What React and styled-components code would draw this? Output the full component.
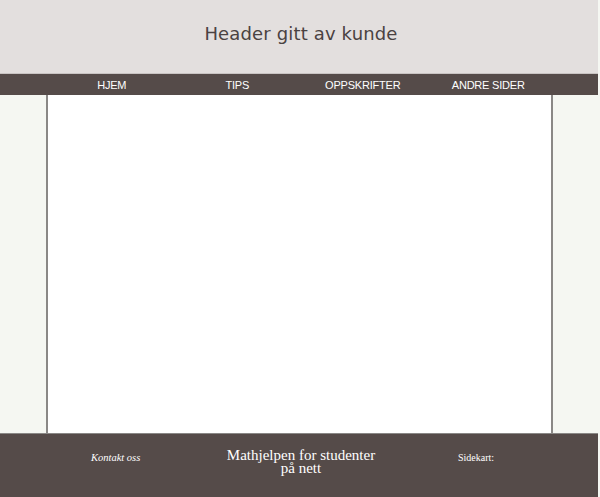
import styled, { createGlobalStyle } from "styled-components";

const GlobalStyle = createGlobalStyle`
  html, body {
    margin: 0;
    padding: 0;
    background: #f5f7f2;
  }
`;

const Page = styled.div`
  width: 598px;
  height: 497px;
  display: flex;
  flex-direction: column;
  background-color: #f5f7f2;
`;

const Header = styled.header`
  height: 73px;
  flex-shrink: 0;
  background-color: #e3dfde;
  border-bottom: 1px solid #c9c4c3;
  display: flex;
  justify-content: center;
  align-items: center;
`;

const Title = styled.h1`
  margin: 0 0 6px 4px;
  font-family: "DejaVu Sans", Verdana, sans-serif;
  font-weight: normal;
  font-size: 18px;
  color: #4a4242;
  letter-spacing: 0.15px;
`;

const Nav = styled.nav`
  height: 21px;
  flex-shrink: 0;
  background-color: #554b49;
  display: flex;
  justify-content: center;
`;

const NavList = styled.ul`
  margin: 0;
  padding: 0;
  list-style: none;
  width: 502px;
  display: grid;
  grid-template-columns: repeat(4, 1fr);
  margin-left: 2px;
`;

const NavItem = styled.li`
  display: flex;
  justify-content: center;
  align-items: center;
  font-family: "Liberation Sans", Arial, sans-serif;
  font-size: 11px;
  letter-spacing: -0.2px;
  color: #ffffff;
  text-transform: uppercase;
`;

const Middle = styled.div`
  flex: 1;
  display: flex;
  justify-content: center;
`;

const Main = styled.main`
  width: 503px;
  margin-left: 1px;
  background-color: #ffffff;
  border-left: 2px solid #8a8886;
  border-right: 2px solid #8a8886;
`;

const Footer = styled.footer`
  height: 64px;
  flex-shrink: 0;
  background-color: #554b49;
  border-top: 1px solid #8a8886;
  display: grid;
  grid-template-columns: 152px 298px 148px;
  padding-top: 15px;
  box-sizing: border-box;
  font-family: "Liberation Serif", "Times New Roman", serif;
  color: #ffffff;
`;

const FooterCell = styled.div`
  white-space: nowrap;
  text-align: ${(p) => p.$align || "center"};
  font-size: ${(p) => p.$size || "11px"};
  font-style: ${(p) => (p.$italic ? "italic" : "normal")};
  line-height: ${(p) => p.$lh || "normal"};
  padding-top: ${(p) => p.$top || "0"};
  padding-left: ${(p) => p.$left || "0"};
`;

const navLinks = ["Hjem", "Tips", "Oppskrifter", "Andre sider"];

export default function App() {
  return (
    <>
      <GlobalStyle />
      <Page>
        <Header>
          <Title>Header gitt av kunde</Title>
        </Header>
        <Nav>
          <NavList>
            {navLinks.map((l) => (
              <NavItem key={l}>{l}</NavItem>
            ))}
          </NavList>
        </Nav>
        <Middle>
          <Main />
        </Middle>
        <Footer>
          <FooterCell $italic $align="left" $size="10.5px" $top="3px" $left="91px">
            Kontakt oss
          </FooterCell>
          <FooterCell $size="15px" $lh="12.5px" $top="0">
            Mathjelpen for studenter
            <br />
            på nett
          </FooterCell>
          <FooterCell $align="left" $size="10px" $top="3px" $left="8px">
            Sidekart:
          </FooterCell>
        </Footer>
      </Page>
    </>
  );
}
